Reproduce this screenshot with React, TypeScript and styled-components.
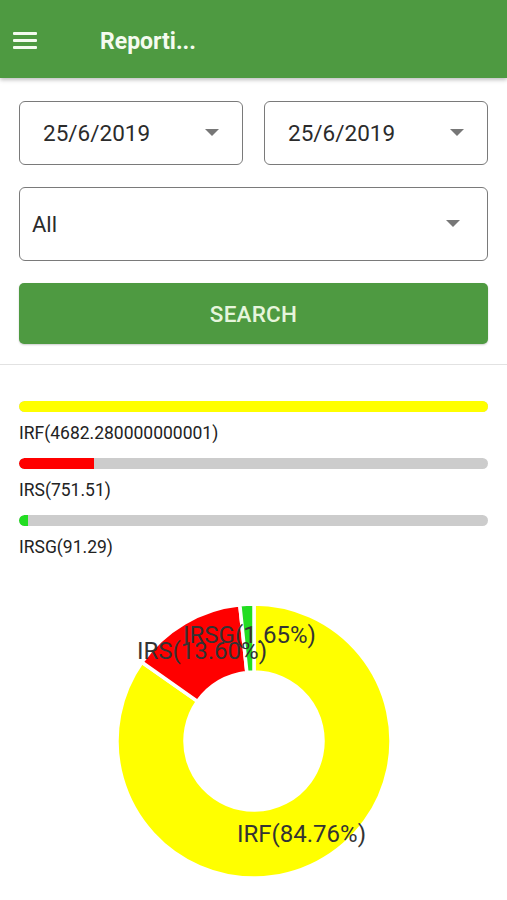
import React from "react";
import styled, { createGlobalStyle } from "styled-components";

const GlobalStyle = createGlobalStyle`
  body {
    margin: 0;
    background: #fff;
    font-family: Roboto, "Noto Sans", Arial, sans-serif;
  }
`;

const Page = styled.div`
  width: 507px;
  min-height: 900px;
  background: #fff;
  overflow: hidden;
`;

const AppBar = styled.div`
  height: 78px;
  background-color: #4e9a41;
  box-shadow: 0 2px 4px rgba(0, 0, 0, 0.25);
  display: flex;
  align-items: center;
  padding-left: 13px;
  position: relative;
  z-index: 1;
`;

const Burger = styled.div`
  width: 24px;
  display: flex;
  flex-direction: column;
  gap: 4px;
  margin-top: 2px;

  span {
    display: block;
    height: 3px;
    background: #f4fbef;
    border-radius: 1px;
  }
`;

const Title = styled.div`
  margin-left: 63px;
  margin-top: 5px;
  color: #f4fbef;
  font-size: 23px;
  font-weight: 700;
`;

const Form = styled.div`
  padding: 23px 19px 20px;
  display: flex;
  flex-direction: column;
  gap: 22px;
  border-bottom: 1px solid #e2e2e2;
`;

const DateRow = styled.div`
  display: flex;
  gap: 21px;
`;

const Field = styled.div<{ $tall?: boolean }>`
  flex: ${(p) => (p.$tall ? "none" : "1")};
  height: ${(p) => (p.$tall ? "74px" : "64px")};
  box-sizing: border-box;
  border: 1.5px solid #7a7a7a;
  border-radius: 6px;
  display: flex;
  align-items: center;
  justify-content: space-between;
  padding: ${(p) => (p.$tall ? "0 27px 0 12px" : "0 23px 0 23px")};
  color: #2b2b2b;
  font-size: ${(p) => (p.$tall ? "22px" : "22.5px")};
`;

const Caret = styled.span`
  width: 0;
  height: 0;
  border-left: 7px solid transparent;
  border-right: 7px solid transparent;
  border-top: 7px solid #777;
  margin-top: -2px;
`;

const SearchButton = styled.button`
  height: 61px;
  border: none;
  border-radius: 5px;
  background-color: #4e9a41;
  color: #e6f5dc;
  font-family: Roboto, "Noto Sans", Arial, sans-serif;
  font-size: 22.5px;
  font-weight: 500;
  letter-spacing: 0.2px;
  box-shadow: 0 1px 2px rgba(0, 0, 0, 0.2);
`;

const Bars = styled.div`
  padding: 36px 19px 0;
  display: flex;
  flex-direction: column;
`;

const BarItem = styled.div`
  margin-bottom: 15px;
`;

const Track = styled.div`
  height: 11px;
  border-radius: 6px;
  background: #cccccc;
  overflow: hidden;
`;

const Fill = styled.div<{ $color: string }>`
  height: 100%;
  background: ${(p) => p.$color};
  border-radius: 6px 0 0 6px;
`;

const BarLabel = styled.div`
  margin-top: 11px;
  height: 20px;
  line-height: 20px;
  font-size: 17.5px;
  color: #222;
`;

const ChartBox = styled.div`
  margin-top: 21px;
  display: flex;
  justify-content: center;
`;

const data = [
  { name: "IRF", value: 4682.280000000001, color: "#ffff00" },
  { name: "IRS", value: 751.51, color: "#ff0000" },
  { name: "IRSG", value: 91.29, color: "#22dd22" },
];

const total = data.reduce((s, d) => s + d.value, 0);
const max = Math.max(...data.map((d) => d.value));

const pt = (cx: number, cy: number, r: number, a: number) => {
  const rad = (a * Math.PI) / 180;
  return [cx + r * Math.sin(rad), cy - r * Math.cos(rad)];
};

const arcPath = (cx: number, cy: number, r0: number, r1: number, a0: number, a1: number) => {
  const [x1, y1] = pt(cx, cy, r1, a0);
  const [x2, y2] = pt(cx, cy, r1, a1);
  const [x3, y3] = pt(cx, cy, r0, a1);
  const [x4, y4] = pt(cx, cy, r0, a0);
  const large = a1 - a0 > 180 ? 1 : 0;
  return `M${x1} ${y1} A${r1} ${r1} 0 ${large} 1 ${x2} ${y2} L${x3} ${y3} A${r0} ${r0} 0 ${large} 0 ${x4} ${y4} Z`;
};

const Donut = () => {
  const cx = 254;
  const cy = 148;
  let a = 0;
  const slices = data.map((d) => {
    const sweep = (d.value / total) * 360;
    const s = { ...d, a0: a, a1: a + sweep };
    a += sweep;
    return s;
  });
  return (
    <svg width="507" height="300" viewBox="0 0 507 300">
      {slices.map((s) => (
        <path
          key={s.name}
          d={arcPath(cx, cy, 69, 137, s.a0, s.a1)}
          fill={s.color}
          stroke="#fff"
          strokeWidth="3.5"
        />
      ))}
      <g fontFamily="Roboto, Arial, sans-serif" fontSize="24" fill="#333">
        <text x="183" y="50">IRSG(1.65%)</text>
        <text x="137" y="66">IRS(13.60%)</text>
        <text x="237" y="249">IRF(84.76%)</text>
      </g>
    </svg>
  );
};

export default function App() {
  return (
    <Page>
      <GlobalStyle />
      <AppBar>
        <Burger>
          <span />
          <span />
          <span />
        </Burger>
        <Title>Reporti...</Title>
      </AppBar>
      <Form>
        <DateRow>
          <Field>
            25/6/2019
            <Caret />
          </Field>
          <Field>
            25/6/2019
            <Caret />
          </Field>
        </DateRow>
        <Field $tall>
          All
          <Caret />
        </Field>
        <SearchButton>SEARCH</SearchButton>
      </Form>
      <Bars>
        {data.map((d) => (
          <BarItem key={d.name}>
            <Track>
              <Fill $color={d.color} style={{ width: `${Math.max((d.value / max) * 100, 2)}%` }} />
            </Track>
            <BarLabel>
              {d.name}({d.value})
            </BarLabel>
          </BarItem>
        ))}
      </Bars>
      <ChartBox>
        <Donut />
      </ChartBox>
    </Page>
  );
}
